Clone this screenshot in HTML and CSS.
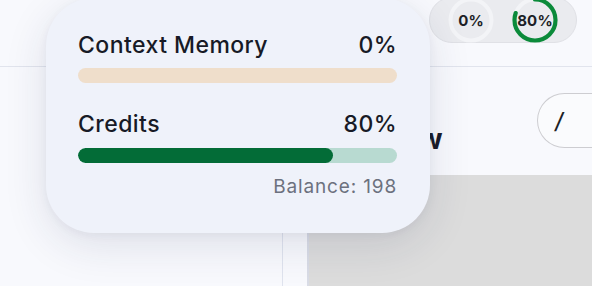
FILE: index.html
```html
<!DOCTYPE html>
<html>
<head>
<meta charset="utf-8">
<link rel="stylesheet" href="styles.css">
</head>
<body>
<div class="app">
  <header class="topbar">
    <div class="meters">
      <div class="ring">
        <svg width="46" height="46" viewBox="0 0 46 46">
          <circle cx="23" cy="23" r="20.5" class="track"/>
        </svg>
        <span class="ring-label">0%</span>
      </div>
      <div class="ring">
        <svg width="46" height="46" viewBox="0 0 46 46">
          <circle cx="23" cy="23" r="20.5" class="track"/>
          <circle cx="23" cy="23" r="20.5" class="progress" stroke-dasharray="103.04 128.8" transform="rotate(-90 23 23)"/>
        </svg>
        <span class="ring-label">80%</span>
      </div>
    </div>
  </header>
  <div class="workspace">
    <aside class="sidebar"></aside>
    <main class="main">
      <div class="toolbar">
        <h2 class="title">Preview</h2>
        <div class="cmd"><span class="slash">/</span></div>
      </div>
      <div class="canvas"></div>
    </main>
  </div>

  <div class="usage-card">
    <div class="row">
      <span>Context Memory</span>
      <span>0%</span>
    </div>
    <div class="bar bar-memory"><div class="fill" style="width:0%"></div></div>
    <div class="row row-credits">
      <span>Credits</span>
      <span>80%</span>
    </div>
    <div class="bar bar-credits"><div class="fill" style="width:80%"></div></div>
    <div class="balance">Balance: 198</div>
  </div>
</div>
</body>
</html>
```

FILE: styles.css
```css
* { box-sizing: border-box; }
html, body {
  margin: 0;
  padding: 0;
  width: 592px;
  height: 286px;
  overflow: hidden;
  background: #f8f9fd;
  font-family: Inter, "Noto Sans", sans-serif;
  color: #1a1c28;
}
.app {
  position: relative;
  width: 592px;
  height: 286px;
  display: flex;
  flex-direction: column;
}
.topbar {
  height: 67px;
  border-bottom: 1.5px solid #e1e4ed;
  display: flex;
  justify-content: flex-end;
  padding-right: 15px;
  flex-shrink: 0;
}
.meters {
  margin-top: -3px;
  height: 46px;
  width: 148px;
  border-radius: 23px;
  background: #eaebef;
  border: 1px solid #e0e1e6;
  display: flex;
  align-items: center;
  padding: 0 18px;
  gap: 18px;
}
.ring {
  position: relative;
  width: 46px;
  height: 46px;
  display: flex;
  align-items: center;
  justify-content: center;
}
.ring svg { position: absolute; left: 0; top: 0; }
.track { fill: none; stroke: #f3f4f7; stroke-width: 4; }
.progress { fill: none; stroke: #0b8a3a; stroke-width: 4.2; stroke-linecap: round; }
.ring-label {
  position: relative;
  font-weight: 700;
  font-size: 15px;
  color: #1d1f27;
  letter-spacing: 0.2px;
}
.workspace {
  flex: 1;
  display: flex;
}
.sidebar {
  width: 283px;
  border-right: 1.5px solid #dfe3ee;
  flex-shrink: 0;
}
.main {
  flex: 1;
  padding-left: 24px;
  display: flex;
  flex-direction: column;
}
.toolbar {
  display: flex;
  align-items: flex-start;
  padding-top: 26px;
  height: 108px;
}
.title {
  margin: 29px 0 0 26px;
  font-size: 28px;
  line-height: 34px;
  font-weight: 700;
  color: #1a1c28;
  flex: 1;
  white-space: nowrap;
}
.cmd {
  width: 90px;
  height: 55px;
  margin-right: -35px;
  border: 1.5px solid #cdcdd1;
  border-radius: 28px 0 0 28px;
  border-right: none;
  background: #fafbfd;
  display: flex;
  align-items: center;
  padding-left: 17px;
}
.slash {
  font-size: 22px;
  font-weight: 500;
  font-style: italic;
  color: #1d1f27;
}
.canvas {
  flex: 1;
  background: #dcdcdc;
  border-left: 2px solid #d9dce6;
}
.usage-card {
  position: absolute;
  left: 46px;
  top: -2px;
  width: 384px;
  height: 235px;
  border-radius: 48px;
  background: #eff2fa;
  box-shadow: 0 12px 44px rgba(30, 40, 80, 0.12), 0 2px 10px rgba(30, 40, 80, 0.05);
  padding: 33px 33px 0 32px;
}
.row {
  display: flex;
  justify-content: space-between;
  font-size: 23px;
  line-height: 28px;
  font-weight: 500;
  letter-spacing: 0.45px;
  color: #171a26;
}
.bar {
  height: 15px;
  border-radius: 8px;
  overflow: hidden;
  margin-top: 9px;
}
.bar-memory { background: #efdecb; }
.bar-credits { background: #b8dad1; margin-top: 10px; }
.fill { height: 100%; border-radius: 8px; }
.bar-credits .fill { background: #036c37; }
.row-credits { margin-top: 27px; }
.balance {
  margin-top: 12px;
  text-align: right;
  font-size: 19px;
  line-height: 24px;
  letter-spacing: 0.85px;
  color: #6c717e;
}
```
